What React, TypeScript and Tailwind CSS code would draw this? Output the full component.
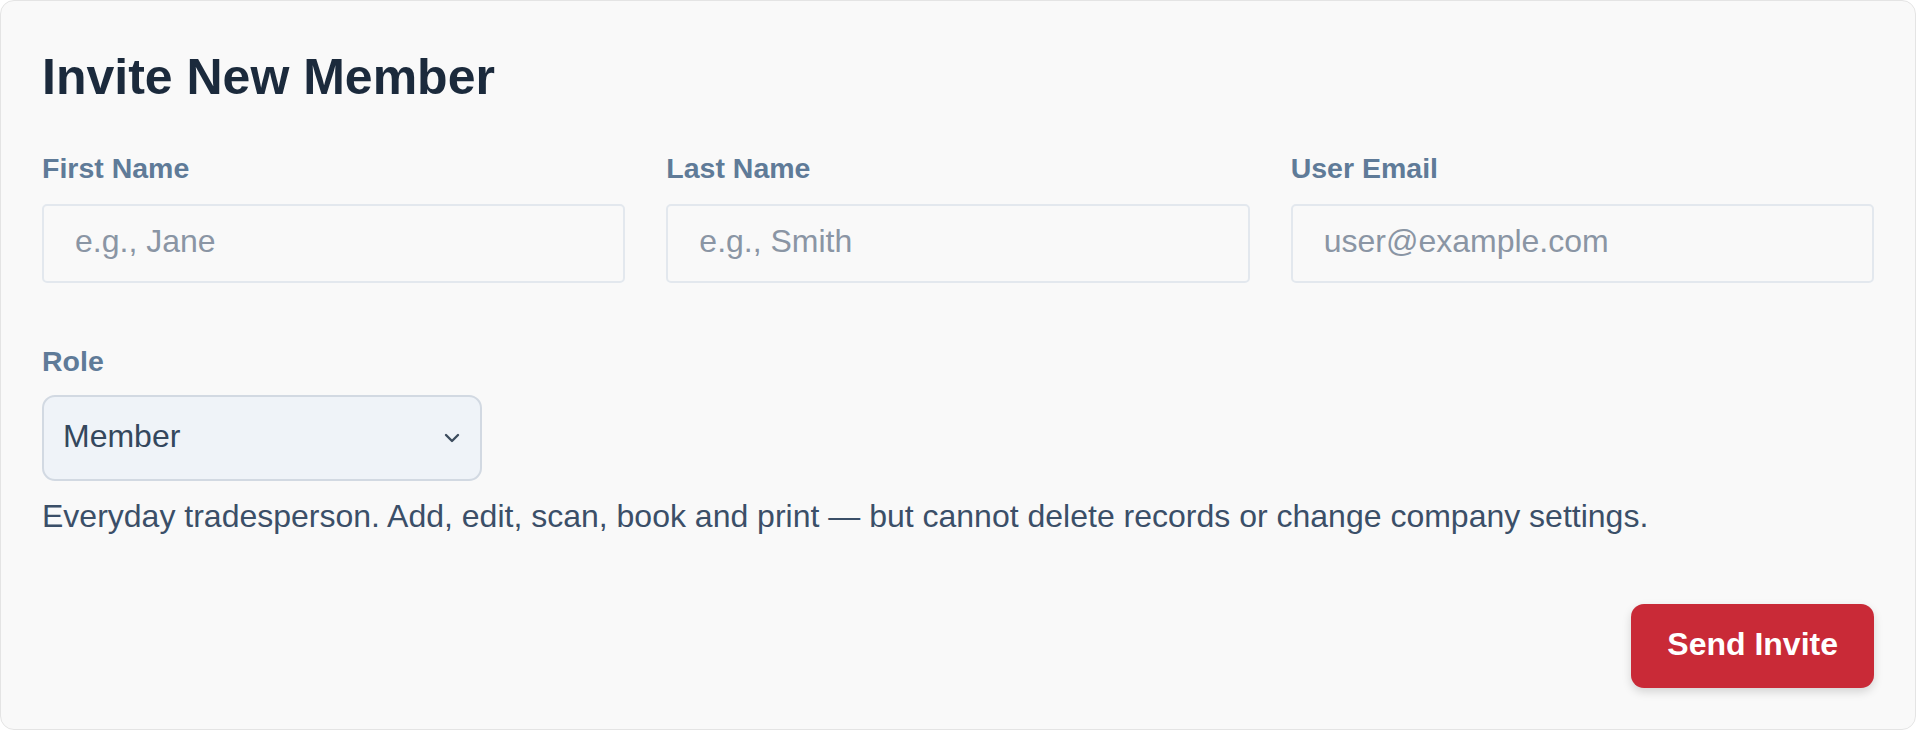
const FIELDS = [
  { label: "First Name", placeholder: "e.g., Jane", type: "text" },
  { label: "Last Name", placeholder: "e.g., Smith", type: "text" },
  { label: "User Email", placeholder: "user@example.com", type: "email" },
];

export default function App() {
  return (
    <div className="bg-white font-['Liberation_Sans',Arial,sans-serif]">
      <div className="flex h-[730px] flex-col rounded-[14px] border border-[#e4e4e4] bg-[#f9f9f9] px-[41px] pt-[51px]">
        <h2 className="m-0 text-[50px] font-bold leading-[50px] text-[#1b2a3c]">Invite New Member</h2>

        <div className="mt-[52px] grid grid-cols-3 gap-x-[41px]">
          {FIELDS.map((f) => (
            <div key={f.label} className="flex flex-col">
              <label className="text-[28.5px] font-bold leading-[28px] text-[#5f7b98]">{f.label}</label>
              <input
                type={f.type}
                placeholder={f.placeholder}
                className="mt-[22px] h-[79px] rounded-[5px] border-2 border-[#e3e8ee] bg-[#f9f9f9] px-[31px] pb-[5px] text-[32px] text-[#2d3e50] outline-none placeholder:text-[#8a95a4]"
              />
            </div>
          ))}
        </div>

        <div className="mt-[64px] flex flex-col">
          <label className="text-[28.5px] font-bold leading-[28px] text-[#5f7b98]">Role</label>
          <div className="relative mt-[20px] w-[440px]">
            <select
              defaultValue="member"
              className="h-[86px] w-full appearance-none rounded-[13px] border-2 border-[#d2d9e2] bg-[#eff3f8] pb-[4px] pl-[19px] pr-12 text-[32px] text-[#34475d] outline-none"
            >
              <option value="admin">Admin</option>
              <option value="member">Member</option>
              <option value="viewer">Viewer</option>
            </select>
            {/* chevron */}
            <svg
              className="pointer-events-none absolute right-[22px] top-1/2 -translate-y-1/2"
              width="16"
              height="10"
              viewBox="0 0 16 10"
              fill="none"
            >
              <path d="M2 2l6 6 6-6" stroke="#3d4c5e" strokeWidth="2.4" strokeLinecap="round" strokeLinejoin="round" />
            </svg>
          </div>
          <p className="m-0 mt-[19px] text-[32px] leading-[32px] text-[#3b4f68]">
            Everyday tradesperson. Add, edit, scan, book and print — but cannot delete records or change company settings.
          </p>
        </div>

        <div className="mt-[72px] flex justify-end">
          <button className="h-[84px] rounded-[13px] bg-[#c92a37] px-[36px] pb-[5px] text-[32px] font-bold text-white shadow-[0_4px_10px_rgba(0,0,0,0.15)]">
            Send Invite
          </button>
        </div>
      </div>
    </div>
  );
}
